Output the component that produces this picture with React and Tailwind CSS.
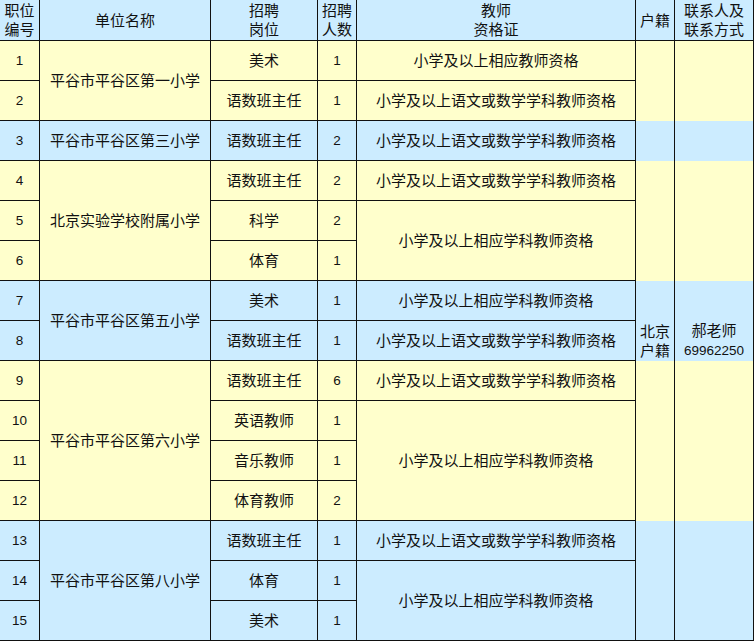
const Y = "bg-[#ffffcc]"
const B = "bg-[#ccecff]"

const SPAN = {
  1: "",
  2: "row-span-2",
  3: "row-span-3",
  4: "row-span-4",
  15: "row-span-15",
}

const ANY = "小学及以上相应教师资格"
const SUBJ = "小学及以上相应学科教师资格"
const LANG = "小学及以上语文或数学学科教师资格"

// 每个学校一组，组内按行列出岗位；资格证可跨行合并
const groups = [
  {
    school: "平谷市平谷区第一小学",
    bg: Y,
    rows: [
      { id: 1, post: "美术", n: 1, qual: ANY },
      { id: 2, post: "语数班主任", n: 1, qual: LANG },
    ],
  },
  {
    school: "平谷市平谷区第三小学",
    bg: B,
    rows: [{ id: 3, post: "语数班主任", n: 2, qual: LANG }],
  },
  {
    school: "北京实验学校附属小学",
    bg: Y,
    rows: [
      { id: 4, post: "语数班主任", n: 2, qual: LANG },
      { id: 5, post: "科学", n: 2, qual: SUBJ, qspan: 2 },
      { id: 6, post: "体育", n: 1 },
    ],
  },
  {
    school: "平谷市平谷区第五小学",
    bg: B,
    rows: [
      { id: 7, post: "美术", n: 1, qual: SUBJ },
      { id: 8, post: "语数班主任", n: 1, qual: LANG },
    ],
  },
  {
    school: "平谷市平谷区第六小学",
    bg: Y,
    rows: [
      { id: 9, post: "语数班主任", n: 6, qual: LANG },
      { id: 10, post: "英语教师", n: 1, qual: SUBJ, qspan: 3 },
      { id: 11, post: "音乐教师", n: 1 },
      { id: 12, post: "体育教师", n: 2 },
    ],
  },
  {
    school: "平谷市平谷区第八小学",
    bg: B,
    rows: [
      { id: 13, post: "语数班主任", n: 1, qual: LANG },
      { id: 14, post: "体育", n: 1, qual: SUBJ, qspan: 2 },
      { id: 15, post: "美术", n: 1 },
    ],
  },
]

function Cell({ bg, span = 1, num, children }) {
  return (
    <div
      className={`${bg} ${SPAN[span]} border-r border-b border-[#111] flex items-center justify-center text-center leading-[19px] ${
        num ? "text-[13.5px]" : "text-[15px]"
      }`}
    >
      {children}
    </div>
  )
}

export default function App() {
  const cells = []

  groups.forEach((g, gi) => {
    g.rows.forEach((r, ri) => {
      cells.push(
        <Cell key={`id${r.id}`} bg={g.bg} num>
          {r.id}
        </Cell>
      )
      if (ri === 0) {
        cells.push(
          <Cell key={`s${gi}`} bg={g.bg} span={g.rows.length}>
            {g.school}
          </Cell>
        )
      }
      cells.push(
        <Cell key={`p${r.id}`} bg={g.bg}>
          {r.post}
        </Cell>
      )
      cells.push(
        <Cell key={`n${r.id}`} bg={g.bg} num>
          {r.n}
        </Cell>
      )
      if (r.qual) {
        cells.push(
          <Cell key={`q${r.id}`} bg={g.bg} span={r.qspan || 1}>
            {r.qual}
          </Cell>
        )
      }
      if (r.id === 1) {
        // 户籍和联系人两列整列合并，底色仍按各组交替
        const stripes =
          "bg-[linear-gradient(#ffffcc_0_80px,#ccecff_80px_120px,#ffffcc_120px_240px,#ccecff_240px_320px,#ffffcc_320px_480px,#ccecff_480px)]"
        cells.push(
          <Cell key="hj" bg={stripes} span={15}>
            北京
            <br />
            户籍
          </Cell>
        )
        cells.push(
          <Cell key="lx" bg={stripes} span={15}>
            <span>
              郝老师
              <br />
              <span className="text-[13.5px]">69962250</span>
            </span>
          </Cell>
        )
      }
    })
  })

  return (
    <div className="w-[754px] h-[641px] bg-white text-[#111] font-['Liberation_Sans','Noto_Sans_CJK_SC',sans-serif]">
      <div className="grid grid-cols-[40px_171px_107px_39px_279px_39px_79px] grid-rows-[41px_repeat(15,40px)]">
        <Cell bg={B}>
          职位
          <br />
          编号
        </Cell>
        <Cell bg={B}>单位名称</Cell>
        <Cell bg={B}>
          招聘
          <br />
          岗位
        </Cell>
        <Cell bg={B}>
          招聘
          <br />
          人数
        </Cell>
        <Cell bg={B}>
          教师
          <br />
          资格证
        </Cell>
        <Cell bg={B}>户籍</Cell>
        <Cell bg={B}>
          联系人及
          <br />
          联系方式
        </Cell>
        {cells}
      </div>
    </div>
  )
}
